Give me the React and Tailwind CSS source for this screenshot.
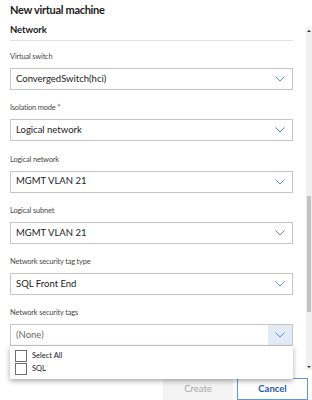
function Chevron() {
  return (
    <svg width="10" height="6" viewBox="0 0 10 6" fill="none" className="shrink-0">
      <path d="M0.5 0.5 L5 5 L9.5 0.5" stroke="#5b8fd6" strokeWidth="1" />
    </svg>
  );
}

function Field({ label, required, value, open, placeholder }) {
  return (
    <div className="flex flex-col">
      <div className="mb-[5px] text-[7.5px] leading-[12px] tracking-[-0.2px] text-[#4a4a4a]">
        {label}
        {required && <span className="ml-[2px] text-[#c4262e]">*</span>}
      </div>
      <div className="relative">
        <div className="flex h-[22px] items-stretch border border-[#c6c6c6] bg-white">
          <div className={`flex flex-1 items-center pl-[5px] text-[9.5px] ${placeholder ? 'text-[#6b6b6b]' : 'text-[#222]'}`}>
            {value}
          </div>
          <div className={`flex w-[24px] items-center justify-center ${open ? 'bg-[#e2ebf6]' : ''}`}>
            <Chevron />
          </div>
        </div>
        {open && (
          <div className="absolute left-0 top-full z-10 flex h-[33px] w-full flex-col gap-[1px] bg-white pl-[5px] pt-[4px] shadow-[0_2px_5px_rgba(0,0,0,0.35)]">
            {['Select All', 'SQL'].map((opt) => (
              <div key={opt} className="flex items-center gap-[5px]">
                <div className="h-[12px] w-[12px] border border-[#6e6e6e] bg-white" />
                <span className="text-[7.5px] leading-[12px] text-[#222]">{opt}</span>
              </div>
            ))}
          </div>
        )}
      </div>
    </div>
  );
}

export default function App() {
  const fields = [
    { label: 'Virtual switch', value: 'ConvergedSwitch(hci)' },
    { label: 'Isolation mode', required: true, value: 'Logical network' },
    { label: 'Logical network', value: 'MGMT VLAN 21' },
    { label: 'Logical subnet', value: 'MGMT VLAN 21' },
    { label: 'Network security tag type', value: 'SQL Front End' },
    { label: 'Network security tags', value: '(None)', placeholder: true, open: true },
  ];

  return (
    <div className="relative flex h-[400px] w-[312px] flex-col overflow-hidden bg-white font-['Lato','Open_Sans',sans-serif]">
      <h1 className="px-[10px] text-[11px] font-bold leading-[20px] tracking-[-0.3px] text-[#1b1b1b]">New virtual machine</h1>

      <div className="mt-[3px] flex h-[355px] shrink-0">
        <div className="ml-[10px] w-[283px] flex-col">
          <h2 className="text-[9.5px] font-bold leading-[14px] tracking-[-0.1px] text-[#1b1b1b]">Network</h2>
          <div className="mt-[3px] h-px bg-[#e1e1e1]" />
          <div className="mt-[10px] flex flex-col gap-[12.25px]">
            {fields.map((f) => (
              <Field key={f.label} {...f} />
            ))}
          </div>
        </div>

        <div className="mb-[8px] ml-auto mt-[5px] flex w-[6px] flex-col items-center bg-[#f0f0f0]">
          <div className="mt-[2px] h-0 w-0 border-x-[2px] border-b-[2px] border-x-transparent border-b-[#333]" />
          <div className="mt-[164px] h-[116px] w-[4px] bg-[#c2c2c2]" />
          <div className="mt-auto mb-[2px] h-0 w-0 border-x-[2px] border-t-[2px] border-x-transparent border-t-[#333]" />
        </div>
      </div>

      <div className="flex justify-end gap-[4px] pr-[4px]">
        <button className="h-[22px] w-[70px] bg-[#f3f3f3] text-[9.5px] text-[#a8a8a8]">Create</button>
        <button className="h-[22px] w-[71px] border border-[#5b9bd8] bg-white text-[9.5px] font-bold text-[#1d5aa8]">Cancel</button>
      </div>
    </div>
  );
}
